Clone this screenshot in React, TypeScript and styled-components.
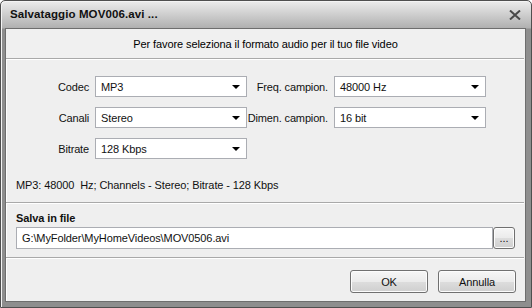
import React from "react";
import styled, { createGlobalStyle } from "styled-components";

const Global = createGlobalStyle`
  html, body { margin: 0; padding: 0; background: #ffffff; }
  body { font-family: "Liberation Sans", Arial, sans-serif; font-size: 11px; color: #000; letter-spacing: -0.1px; }
  * { box-sizing: border-box; }
`;

const Window = styled.div`
  width: 532px;
  height: 308px;
  display: flex;
  flex-direction: column;
  background: linear-gradient(#ececec 0px, #cdcdcd 14px, #b0b0b0 27px, #8e8e8e 28px, #8e8e8e 100%);
  border: 1px solid #4f4f4f;
  border-radius: 5px 5px 0 0;
  padding: 0 5px 5px 4px;
  box-shadow: inset 1px 1px 0 #f4f4f4;
`;

const TitleBar = styled.div`
  height: 27px;
  display: flex;
  align-items: center;
  justify-content: space-between;
  padding: 0 4px 1px 5px;
`;

const Title = styled.span`
  font-weight: bold;
  font-size: 11.5px;
  color: #111;
  letter-spacing: 0.1px;
`;

const CloseBox = styled.div`
  width: 14px;
  height: 12px;
  display: flex;
  align-items: center;
  justify-content: center;
  margin-top: 1px;
`;

const Content = styled.div`
  flex: 1;
  background: #efefef;
  border: 1px solid #6e6e6e;
  box-shadow: inset 1px 1px 0 #ffffff;
  display: flex;
  flex-direction: column;
`;

const Header = styled.div`
  height: 29px;
  display: flex;
  align-items: center;
  justify-content: center;
  background: #f0f0f0;
`;

const Separator = styled.div`
  height: 2px;
  border-top: 1px solid #a9a9a9;
  border-bottom: 1px solid #ffffff;
  margin-right: 1px;
`;

const FormGrid = styled.div`
  display: grid;
  grid-template-columns: 83px 152px 87px 152px;
  grid-auto-rows: 21px;
  row-gap: 10px;
  padding: 16px 0 0 6px;
`;

const Label = styled.label`
  display: flex;
  align-items: center;
  justify-content: flex-end;
  padding-right: 6px;
  white-space: nowrap;
  letter-spacing: -0.15px;
  color: #111;
`;

const Combo = styled.div`
  border: 1px solid #abadb3;
  background: #ffffff;
  display: flex;
  align-items: center;
  justify-content: space-between;
  padding: 0 6px 0 5px;
  color: #111;
`;

const Arrow = styled.span`
  width: 0;
  height: 0;
  border-left: 4px solid transparent;
  border-right: 4px solid transparent;
  border-top: 4px solid #000;
  margin-top: 1px;
`;

const Summary = styled.div`
  padding: 20px 0 0 10px;
  height: 43px;
  color: #111;
`;

const Section = styled.div`
  display: flex;
  flex-direction: column;
  padding: 7px 10px 0 10px;
  height: 53px;
`;

const SectionTitle = styled.div`
  font-weight: bold;
  height: 16px;
  line-height: 14px;
  color: #111;
`;

const PathRow = styled.div`
  display: flex;
  height: 22px;
`;

const PathInput = styled.div`
  flex: 1;
  border: 1px solid #abadb3;
  background: #fff;
  display: flex;
  align-items: center;
  padding-left: 5px;
  color: #111;
`;

const Button = styled.button<{ $w: number }>`
  width: ${(p) => p.$w}px;
  height: ${(p) => (p.$w < 30 ? 22 : 23)}px;
  border: 1px solid #707070;
  border-radius: 3px;
  background: linear-gradient(#f6f6f6, #ebebeb 50%, #dddddd 51%, #cfcfcf);
  font-family: "Liberation Sans", Arial, sans-serif;
  font-size: 11px;
  letter-spacing: -0.1px;
  color: #111;
  padding: 0;
  display: flex;
  align-items: center;
  justify-content: center;
  box-shadow: inset 0 0 0 1px #fcfcfc;
`;

const Footer = styled.div`
  flex: 1;
  display: flex;
  justify-content: flex-end;
  align-items: flex-start;
  gap: 10px;
  padding: 11px 9px 0 0;
`;

const fields: [string, string][] = [
  ["Codec", "MP3"],
  ["Freq. campion.", "48000 Hz"],
  ["Canali", "Stereo"],
  ["Dimen. campion.", "16 bit"],
  ["Bitrate", "128 Kbps"],
];

export default function App() {
  return (
    <>
      <Global />
      <Window>
        <TitleBar>
          <Title>Salvataggio MOV006.avi ...</Title>
          <CloseBox>
            <svg width="12" height="10" viewBox="0 0 12 10">
              <path d="M1 0.5 L11 9.5 M11 0.5 L1 9.5" stroke="#4a4a4a" strokeWidth="2" fill="none" />
            </svg>
          </CloseBox>
        </TitleBar>
        <Content>
          <Header>Per favore seleziona il formato audio per il tuo file video</Header>
          <Separator />
          <FormGrid>
            {fields.map(([l, v]) => (
              <React.Fragment key={l}>
                <Label>{l}</Label>
                <Combo>
                  <span>{v}</span>
                  <Arrow />
                </Combo>
              </React.Fragment>
            ))}
          </FormGrid>
          <Summary>MP3: 48000&nbsp; Hz; Channels - Stereo; Bitrate - 128 Kbps</Summary>
          <Separator />
          <Section>
            <SectionTitle>Salva in file</SectionTitle>
            <PathRow>
              <PathInput>G:\MyFolder\MyHomeVideos\MOV0506.avi</PathInput>
              <Button $w={22}>...</Button>
            </PathRow>
          </Section>
          <Separator />
          <Footer>
            <Button $w={78}>OK</Button>
            <Button $w={78}>Annulla</Button>
          </Footer>
        </Content>
      </Window>
    </>
  );
}
